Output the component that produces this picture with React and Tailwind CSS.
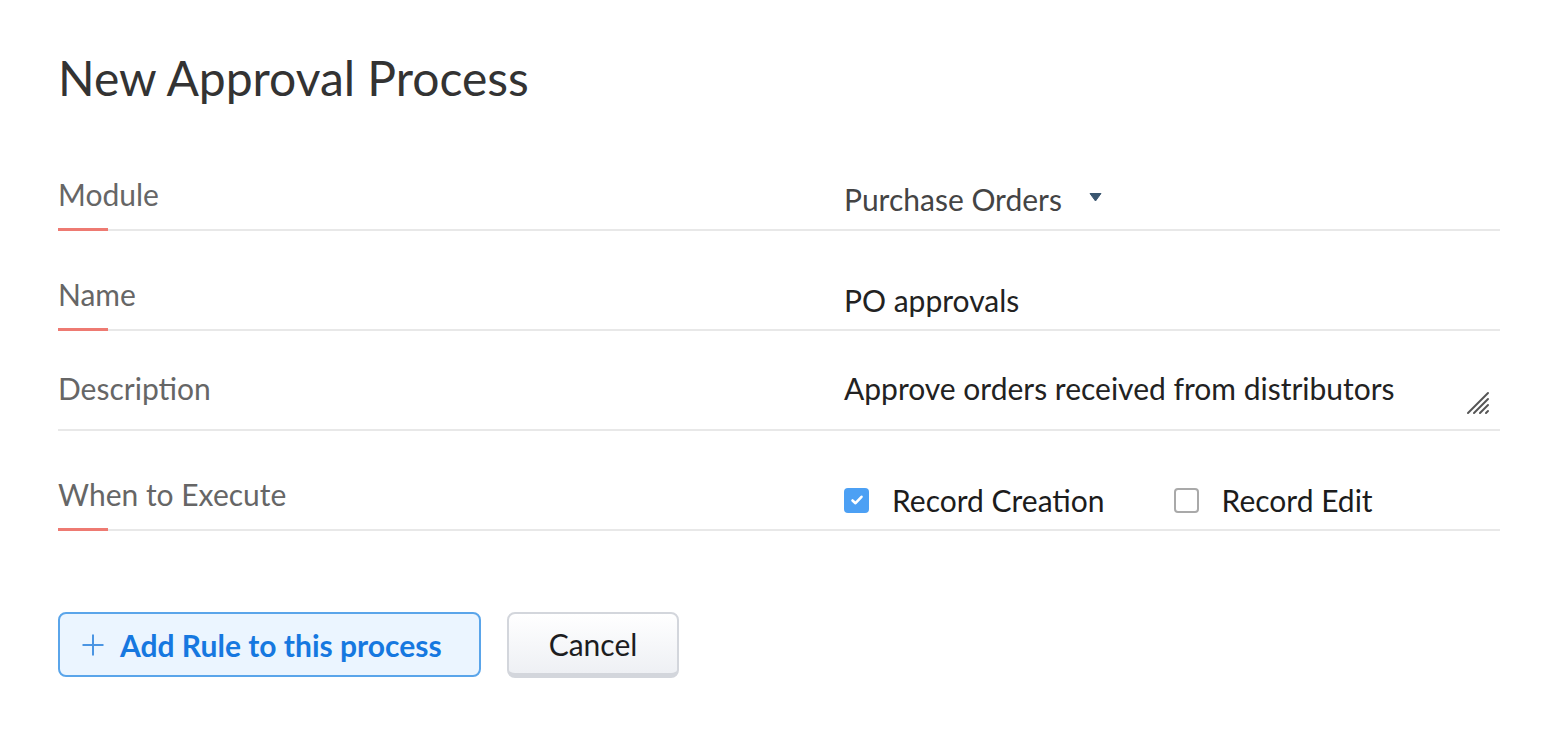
import React, { useState } from 'react';

const font = { fontFamily: 'Lato, "Open Sans", sans-serif' };

function Row({ label, accent = true, children, labelPad = 'pb-[18px]' }) {
  return (
    <div className="relative flex items-end h-[100px] border-b-2 border-[#e8e8e8]">
      <div className={`w-[786px] ${labelPad} text-[30px] leading-[34px] text-[#666]`}>{label}</div>
      <div className="flex-1 flex items-end">{children}</div>
      {accent && <div className="absolute left-0 -bottom-[2px] w-[50px] h-[3px] bg-[#ee7a72]" />}
    </div>
  );
}

function Checkbox({ checked, onChange, label }) {
  return (
    <label className="flex items-center cursor-pointer" onClick={onChange}>
      {checked ? (
        <span className="w-[25px] h-[25px] rounded-[4px] bg-[#4ca0f4] flex items-center justify-center">
          <svg width="14" height="14" viewBox="0 0 14 14">
            <path d="M2.5 7.5 L5.5 10.2 L11.5 3.8" fill="none" stroke="white" strokeWidth="2.6" strokeLinecap="round" strokeLinejoin="round" />
          </svg>
        </span>
      ) : (
        <span className="w-[25px] h-[25px] rounded-[4px] border-2 border-[#a9a9a9] bg-white" />
      )}
      <span className="ml-[23px] text-[30px] leading-[34px] text-[#1c1c1c]">{label}</span>
    </label>
  );
}

export default function App() {
  const [creation, setCreation] = useState(true);
  const [edit, setEdit] = useState(false);

  return (
    <div className="w-[1560px] h-[740px] bg-white px-[58px] pt-[49px]" style={font}>
      <h1 className="text-[48px] leading-[58px] text-[#333]">New Approval Process</h1>

      <div className="w-[1442px] mt-[24px]">
        <Row label="Module">
          <div className="flex items-center pb-[13px]">
            <span className="text-[30px] leading-[34px] text-[#444]">Purchase Orders</span>
            <svg className="ml-[27px] mt-[-4px]" width="13" height="10" viewBox="0 0 13 10">
              <path d="M1 1.5 L12 1.5 L6.5 9 Z" fill="#3a5670" stroke="#3a5670" strokeWidth="1" strokeLinejoin="round" />
            </svg>
          </div>
        </Row>

        <Row label="Name">
          <div className="pb-[12px] text-[30px] leading-[34px] text-[#222]">PO approvals</div>
        </Row>

        <Row label="Description" accent={false} labelPad="pb-[24px]">
          <div className="relative w-full pb-[24px] text-[30px] leading-[34px] text-[#222]">
            Approve orders received from distributors
            <svg className="absolute right-[8px] bottom-[14px]" width="26" height="24" viewBox="0 0 26 24">
              <g stroke="#555" strokeWidth="2" strokeLinecap="round">
                <line x1="2" y1="22" x2="22" y2="2" />
                <line x1="8" y1="22" x2="22" y2="8" />
                <line x1="14" y1="22" x2="22" y2="14" />
                <line x1="20" y1="22" x2="22" y2="20" />
              </g>
            </svg>
          </div>
        </Row>

        <Row label="When to Execute">
          <div className="flex items-center pb-[12px]">
            <Checkbox checked={creation} onChange={() => setCreation(!creation)} label="Record Creation" />
            <div className="ml-[69px]">
              <Checkbox checked={edit} onChange={() => setEdit(!edit)} label="Record Edit" />
            </div>
          </div>
        </Row>
      </div>

      <div className="flex items-start mt-[81px]">
        <button className="flex items-center h-[65px] w-[423px] rounded-[8px] border-2 border-[#5aa5ea] bg-[#ebf5ff] pl-[21px]">
          <svg width="24" height="24" viewBox="0 0 24 24">
            <path d="M12 1.5 V22.5 M1.5 12 H22.5" stroke="#4a95e3" strokeWidth="2" />
          </svg>
          <span className="ml-[15px] text-[30px] leading-[34px] font-bold text-[#1678e0]">Add Rule to this process</span>
        </button>
        <button className="ml-[26px] h-[66px] w-[172px] rounded-[8px] border-2 border-[#d3d6dc] border-b-[5px] bg-gradient-to-b from-white to-[#eef0f4] text-[30px] leading-[34px] text-[#1d1d1f]">
          Cancel
        </button>
      </div>
    </div>
  );
}
